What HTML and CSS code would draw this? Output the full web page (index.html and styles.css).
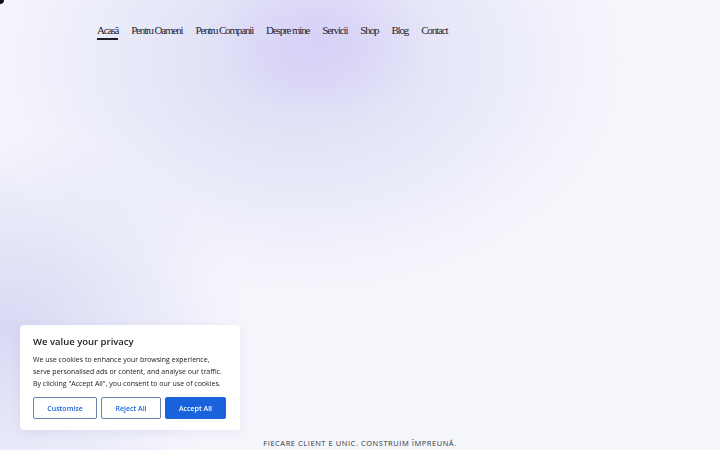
FILE: index.html
```html
<!DOCTYPE html>
<html lang="ro">
<head>
    <meta charset="UTF-8" />
    <meta name="viewport" content="width=device-width, initial-scale=1" />
    <title>Acasă</title>
    <link rel="stylesheet" href="styles.css">
</head>
<body>
<span class="cursor-dot"></span>

<div class="page">
    <header class="site-header">
        <nav class="main-nav">
            <a href="#" class="active">Acasă</a>
            <a href="#">Pentru Oameni</a>
            <a href="#">Pentru Companii</a>
            <a href="#">Despre mine</a>
            <a href="#">Servicii</a>
            <a href="#">Shop</a>
            <a href="#">Blog</a>
            <a href="#">Contact</a>
        </nav>
    </header>

    <section class="hero">
        <p class="tagline">Fiecare client e unic. Construim împreună.</p>
    </section>
</div>

<div class="cookie-banner">
    <h3>We value your privacy</h3>
    <p>We use cookies to enhance your browsing experience, serve personalised ads or content, and analyse our traffic. By clicking "Accept All", you consent to our use of cookies.</p>
    <div class="cookie-actions">
        <button class="btn-outline btn-customise">Customise</button>
        <button class="btn-outline btn-reject">Reject All</button>
        <button class="btn-accept">Accept All</button>
    </div>
</div>
</body>
</html>
```

FILE: styles.css
```css
:root {
    --bg: #f5f6fc;
    --text: #262636;
    --cookie-blue: #1863dc;
    --cookie-border: #6a84aa;
}
html, body {
    margin: 0;
    padding: 0;
    height: 100%;
}
body {
    font-family: "Open Sans", "Noto Sans", sans-serif;
    color: var(--text);
    background-color: var(--bg);
    background-image:
        radial-gradient(ellipse 110px 80px at 320px 40px, rgba(214, 206, 248, 0.8), rgba(214, 206, 248, 0) 100%),
        radial-gradient(ellipse 320px 230px at 300px 60px, rgba(218, 218, 245, 1), rgba(218, 218, 245, 0) 100%),
        radial-gradient(ellipse 230px 200px at 10px 330px, rgba(216, 216, 244, 1), rgba(216, 216, 244, 0) 100%);
    overflow: hidden;
}
.cursor-dot {
    position: fixed;
    top: -4px;
    left: -4px;
    width: 8px;
    height: 8px;
    border-radius: 50%;
    background: #111;
}
.page {
    height: 100vh;
    display: flex;
    flex-direction: column;
}
.site-header {
    padding: 23px 0 0 97px;
}
.main-nav {
    display: flex;
    gap: 13px;
}
.main-nav a {
    font-family: "Liberation Serif", "DejaVu Serif", serif;
    font-size: 11px;
    letter-spacing: -1.15px;
    color: var(--text);
    text-decoration: none;
    line-height: 14px;
    padding-bottom: 1px;
    border-bottom: 2px solid transparent;
}
.main-nav a.active {
    border-bottom-color: #1d1d2b;
}
.hero {
    flex: 1;
    display: flex;
    flex-direction: column;
    justify-content: flex-end;
    align-items: center;
}
.tagline {
    margin: 0 0 1px;
    font-size: 7.5px;
    letter-spacing: 0.55px;
    text-transform: uppercase;
    color: #333340;
    line-height: 12px;
}
.cookie-banner {
    position: fixed;
    left: 20px;
    bottom: 20px;
    width: 220px;
    box-sizing: border-box;
    padding: 10px 14px 11px 13px;
    background: #fff;
    border-radius: 4px;
    box-shadow: 0 2px 10px rgba(60, 60, 120, 0.08);
}
.cookie-banner h3 {
    margin: 0 0 5px;
    font-size: 9.5px;
    font-weight: 600;
    color: #212121;
    line-height: 14px;
}
.cookie-banner p {
    margin: 0 0 7px;
    font-size: 7px;
    line-height: 12px;
    color: #212121;
}
.cookie-actions {
    display: flex;
    gap: 4px;
}
.cookie-actions button {
    font-family: "Open Sans", "Noto Sans", sans-serif;
    font-size: 7px;
    font-weight: 600;
    height: 22px;
    border-radius: 2px;
    cursor: pointer;
    padding: 0;
}
.btn-outline {
    background: #fff;
    color: var(--cookie-blue);
    border: 1.5px solid var(--cookie-border);
}
.btn-customise {
    width: 64px;
}
.btn-reject {
    width: 60px;
}
.btn-accept {
    width: 61px;
    background: var(--cookie-blue);
    color: #fff;
    border: 1.5px solid var(--cookie-blue);
}
```
